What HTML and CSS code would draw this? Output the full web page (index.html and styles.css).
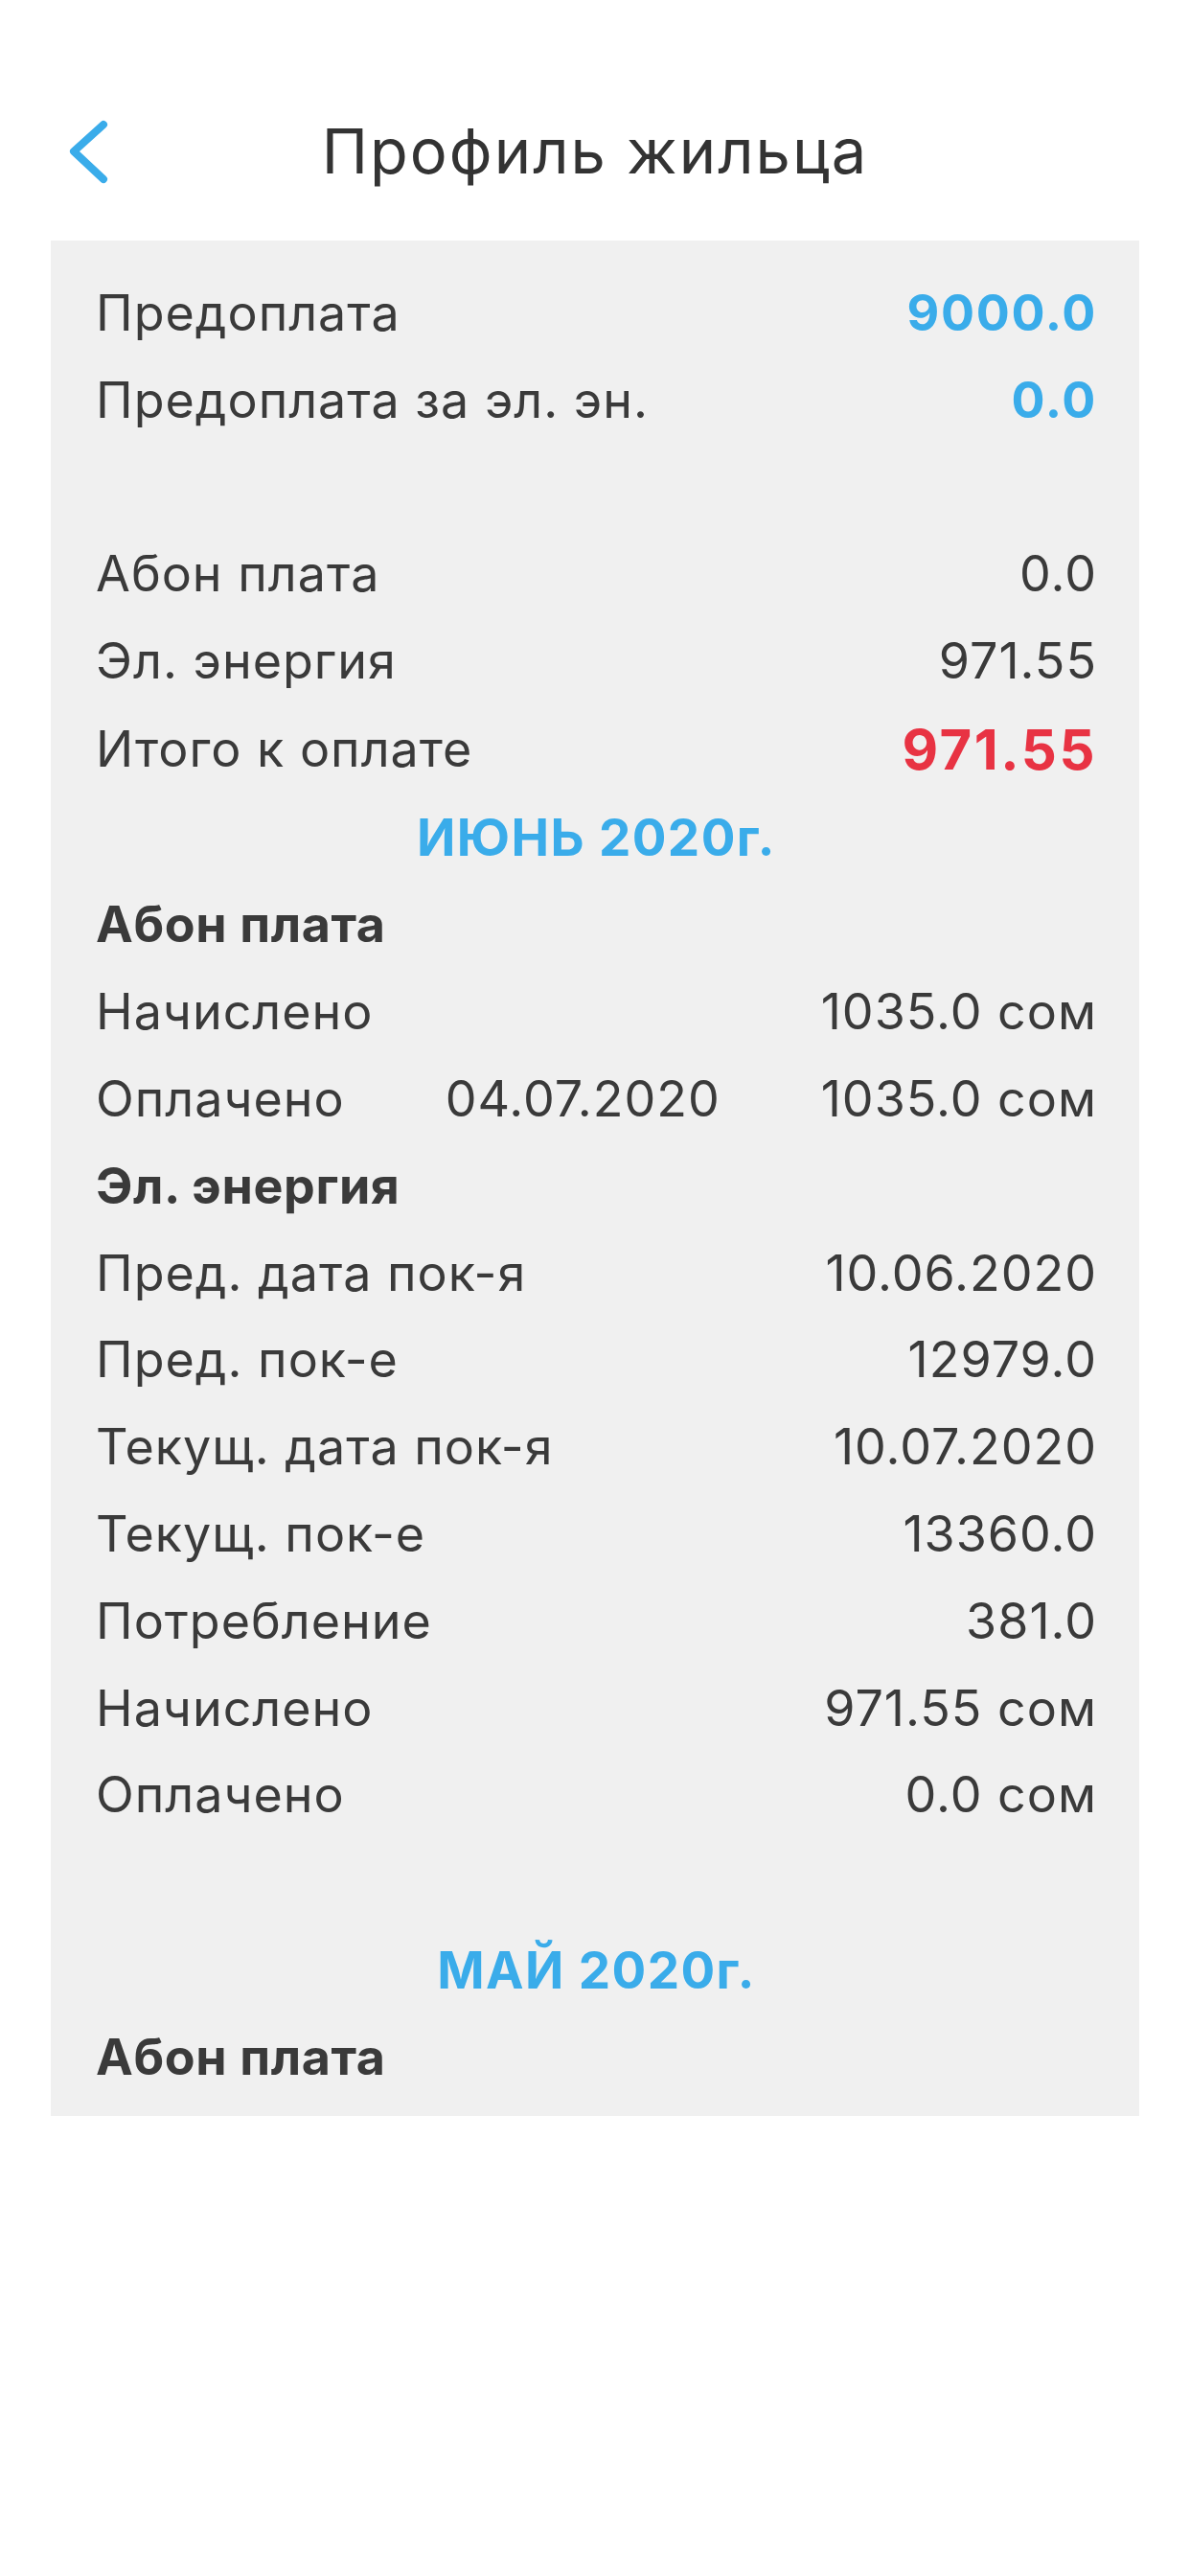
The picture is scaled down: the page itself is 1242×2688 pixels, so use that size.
FILE: index.html
```html
<!DOCTYPE html>
<html lang="ru">
<head>
<meta charset="utf-8">
<title>Профиль жильца</title>
<link rel="stylesheet" href="styles.css">
</head>
<body>
<div class="screen">
  <header class="nav">
    <button class="back" aria-label="Назад">
      <svg width="60" height="80" viewBox="0 0 60 80"><path d="M48 12 L17 40 L48 69" fill="none" stroke="#3aacea" stroke-width="8" stroke-linecap="round" stroke-linejoin="round"/></svg>
    </button>
    <h1 class="title">Профиль жильца</h1>
  </header>
  <main class="card">
    <div class="row"><span>Предоплата</span><span class="blue">9000.0</span></div>
    <div class="row"><span>Предоплата за эл. эн.</span><span class="blue">0.0</span></div>
    <div class="spacer"></div>
    <div class="row"><span>Абон плата</span><span>0.0</span></div>
    <div class="row"><span>Эл. энергия</span><span>971.55</span></div>
    <div class="row total"><span>Итого к оплате</span><span class="red">971.55</span></div>
    <div class="month">ИЮНЬ 2020г.</div>
    <div class="row head"><span>Абон плата</span></div>
    <div class="row"><span>Начислено</span><span>1035.0 сом</span></div>
    <div class="row"><span>Оплачено</span><span>04.07.2020</span><span>1035.0 сом</span></div>
    <div class="row head"><span>Эл. энергия</span></div>
    <div class="row"><span>Пред. дата пок-я</span><span>10.06.2020</span></div>
    <div class="row"><span>Пред. пок-е</span><span>12979.0</span></div>
    <div class="row"><span>Текущ. дата пок-я</span><span>10.07.2020</span></div>
    <div class="row"><span>Текущ. пок-е</span><span>13360.0</span></div>
    <div class="row"><span>Потребление</span><span>381.0</span></div>
    <div class="row"><span>Начислено</span><span>971.55 сом</span></div>
    <div class="row"><span>Оплачено</span><span>0.0 сом</span></div>
    <div class="spacer"></div>
    <div class="month">МАЙ 2020г.</div>
    <div class="row head"><span>Абон плата</span></div>
  </main>
</div>
</body>
</html>
```

FILE: styles.css
```css
html, body {
  margin: 0;
  padding: 0;
  background: #ffffff;
}
body {
  font-family: Inter, "Noto Sans", "Liberation Sans", sans-serif;
  color: #3a3a3a;
}
.screen {
  width: 1242px;
  min-height: 2688px;
}
.nav {
  position: relative;
  height: 120px;
  margin-top: 98px;
  margin-bottom: 33px;
  display: flex;
  align-items: center;
  justify-content: center;
}
.back {
  position: absolute;
  left: 60px;
  top: 20px;
  width: 60px;
  height: 80px;
  padding: 0;
  border: 0;
  background: none;
}
.back svg { display: block; }
.title {
  margin: 0;
  font-size: 65px;
  font-weight: 400;
  line-height: 120px;
  color: #333333;
  letter-spacing: 2px;
}
.card {
  margin: 0 53px;
  background: #f0f0f0;
  padding: 31px 44px 15px 47px;
  display: flex;
  flex-direction: column;
}
.row {
  display: flex;
  justify-content: space-between;
  align-items: center;
  height: 90.8px;
  font-size: 52px;
  line-height: 90.8px;
  letter-spacing: 1px;
  white-space: nowrap;
}
.total { height: 92.5px; }
.spacer { height: 90.8px; }
.head { font-weight: 700; letter-spacing: 0.6px; }
.blue { color: #3aacea; font-weight: 700; letter-spacing: 1.7px; }
.red { color: #e83343; font-weight: 700; font-size: 58px; letter-spacing: 2.5px; }
.month {
  height: 92px;
  line-height: 92px;
  text-align: center;
  font-size: 53px;
  font-weight: 700;
  letter-spacing: 1.4px;
  color: #3aacea;
}
```
